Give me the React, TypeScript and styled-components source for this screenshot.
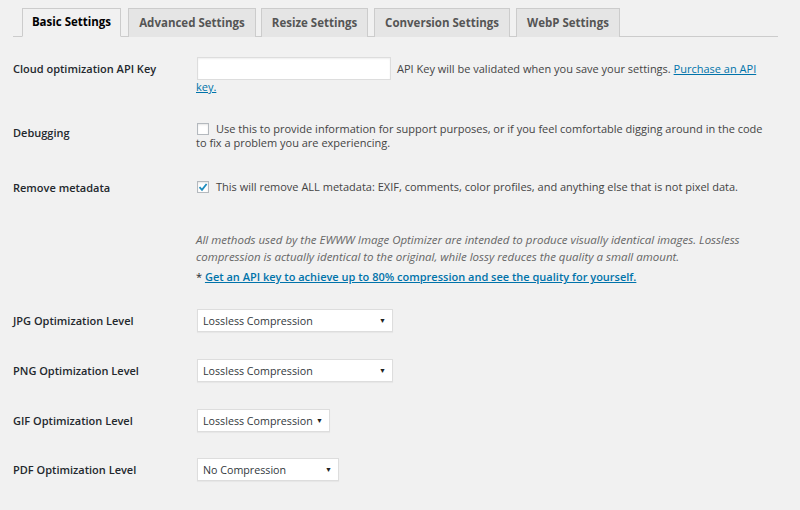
import React from "react";
import styled, { createGlobalStyle } from "styled-components";

const Global = createGlobalStyle`
  html, body { margin: 0; padding: 0; background: #f1f1f1; }
  body { font-family: "Open Sans", "Noto Sans", sans-serif; color: #444; font-size: 11px; }
`;

const Page = styled.div`
  width: 800px;
  height: 510px;
  box-sizing: border-box;
  padding: 7px 22px 0 13px;
  background: #f1f1f1;
  overflow: hidden;
`;

const TabBar = styled.nav`
  display: flex;
  align-items: flex-end;
  padding-left: 9px;
  border-bottom: 1px solid #ccc;
  height: 29px;
`;

const Tab = styled.div<{ $active?: boolean; $w: number; $gap: number }>`
  box-sizing: border-box;
  width: ${(p) => p.$w}px;
  margin-left: ${(p) => p.$gap}px;
  display: flex;
  align-items: center;
  justify-content: center;
  white-space: nowrap;
  border: 1px solid #ccc;
  border-bottom: none;
  margin-bottom: -1px;
  height: 29px;
  padding-bottom: 2px;
  background: ${(p) => (p.$active ? "#f1f1f1" : "#e5e5e5")};
  color: ${(p) => (p.$active ? "#000" : "#555")};
  font-weight: 700;
  font-size: 11.5px;
  ${(p) => (p.$active ? "border-bottom: 1px solid #f1f1f1;" : "")}
`;

const Form = styled.div`
  display: flex;
  flex-direction: column;
`;

const Row = styled.div<{ $gap: number }>`
  display: grid;
  grid-template-columns: 183px 1fr;
  margin-top: ${(p) => p.$gap}px;
  align-items: start;
`;

const Label = styled.div<{ $top: number }>`
  padding-top: ${(p) => p.$top}px;
  font-weight: 600;
  color: #23282d;
  line-height: 14px;
`;

const Field = styled.div`
  line-height: 14px;
  color: #444;
`;

const InputLine = styled.div`
  display: flex;
  align-items: center;
  gap: 6px;
`;

const TextInput = styled.input`
  width: 194px;
  height: 23px;
  box-sizing: border-box;
  border: 1px solid #ddd;
  background: #fff;
  box-shadow: inset 0 1px 2px rgba(0, 0, 0, 0.07);
  margin: 0 0 0 1px;
  padding: 0 4px;
  outline: none;
`;

const Link = styled.a<{ $strong?: boolean }>`
  color: #0073aa;
  text-decoration: underline;
  font-weight: ${(p) => (p.$strong ? 600 : 400)};
`;

const CheckLine = styled.div`
  display: flex;
  align-items: center;
  gap: 7px;
  padding-left: 1px;
`;

const Box = styled.span`
  width: 12px;
  height: 12px;
  box-sizing: border-box;
  border: 1px solid #b4b9be;
  background: #fff;
  box-shadow: inset 0 1px 2px rgba(0, 0, 0, 0.1);
  display: inline-flex;
  align-items: center;
  justify-content: center;
  flex: none;
`;

const Desc = styled.div`
  line-height: 17px;
  padding-top: 1px;
`;

const Italic = styled.p`
  margin: 0;
  font-style: italic;
  font-size: 11.5px;
  color: #666;
`;

const Note = styled.p`
  margin: 3px 0 0;
  color: #23282d;
`;

const Select = styled.div<{ $w: number }>`
  width: ${(p) => p.$w}px;
  height: 23px;
  box-sizing: border-box;
  border: 1px solid #ddd;
  background: #fff;
  box-shadow: 0 1px 1px rgba(0, 0, 0, 0.04);
  margin-left: 1px;
  display: flex;
  align-items: center;
  justify-content: space-between;
  padding: 0 6px 0 5px;
  color: #32373c;
  font-size: 10.7px;
`;

const Arrow = styled.span`
  font-size: 7px;
  color: #222;
`;

const Check = () => (
  <svg width="10" height="10" viewBox="0 0 10 10">
    <path d="M1.5 5.2 L4 7.8 L8.6 2" fill="none" stroke="#1e8cbe" strokeWidth="1.8" />
  </svg>
);

const tabs = [
  { label: "Basic Settings", w: 99, gap: 0, active: true },
  { label: "Advanced Settings", w: 128, gap: 7 },
  { label: "Resize Settings", w: 107, gap: 5 },
  { label: "Conversion Settings", w: 136, gap: 6 },
  { label: "WebP Settings", w: 104, gap: 6 },
];

const selects = [
  { label: "JPG Optimization Level", value: "Lossless Compression", w: 196, gap: 24 },
  { label: "PNG Optimization Level", value: "Lossless Compression", w: 196, gap: 27 },
  { label: "GIF Optimization Level", value: "Lossless Compression", w: 133, gap: 27 },
  { label: "PDF Optimization Level", value: "No Compression", w: 142, gap: 26 },
];

export default function App() {
  return (
    <Page>
      <Global />
      <TabBar>
        {tabs.map((t) => (
          <Tab key={t.label} $active={t.active} $w={t.w} $gap={t.gap}>
            {t.label}
          </Tab>
        ))}
      </TabBar>
      <Form>
        <Row $gap={20}>
          <Label $top={5}>Cloud optimization API Key</Label>
          <Field>
            <InputLine>
              <TextInput type="text" />
              <span>
                API Key will be validated when you save your settings.{" "}
                <Link $strong={false}>Purchase an API</Link>
              </span>
            </InputLine>
            <Link>key.</Link>
          </Field>
        </Row>
        <Row $gap={28}>
          <Label $top={4}>Debugging</Label>
          <Field>
            <CheckLine>
              <Box />
              <span>
                Use this to provide information for support purposes, or if you feel comfortable digging around in the code
              </span>
            </CheckLine>
            <div>to fix a problem you are experiencing.</div>
          </Field>
        </Row>
        <Row $gap={30}>
          <Label $top={1}>Remove metadata</Label>
          <Field>
            <CheckLine>
              <Box>
                <Check />
              </Box>
              <span>This will remove ALL metadata: EXIF, comments, color profiles, and anything else that is not pixel data.</span>
            </CheckLine>
          </Field>
        </Row>
        <Row $gap={35}>
          <span />
          <Desc>
            <Italic>
              All methods used by the EWWW Image Optimizer are intended to produce visually identical images. Lossless
              <br />
              compression is actually identical to the original, while lossy reduces the quality a small amount.
            </Italic>
            <Note>
              * <Link $strong>Get an API key to achieve up to 80% compression and see the quality for yourself.</Link>
            </Note>
          </Desc>
        </Row>
        {selects.map((s) => (
          <Row key={s.label} $gap={s.gap}>
            <Label $top={5}>{s.label}</Label>
            <Select $w={s.w}>
              <span>{s.value}</span>
              <Arrow>▼</Arrow>
            </Select>
          </Row>
        ))}
      </Form>
    </Page>
  );
}
